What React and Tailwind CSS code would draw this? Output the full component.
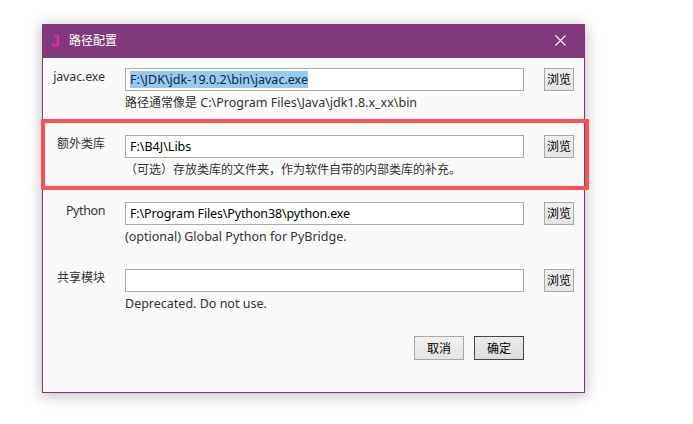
const FONT = "font-['Noto_Sans','Noto_Sans_CJK_SC',sans-serif]";

function BrowseButton() {
  return (
    <button className="ml-5 flex h-[23px] w-[30px] shrink-0 items-center justify-center whitespace-nowrap border border-[#a8a8a8] bg-gradient-to-b from-[#f0f0f0] to-[#e4e4e4] pt-px text-[12px] leading-none text-black">
      浏览
    </button>
  );
}

function Row({ label, labelClass, value, valueClass = '', hint }) {
  return (
    <div className="flex h-[67px] items-start">
      <div className={`mr-5 w-[62px] text-right leading-[18px] whitespace-nowrap ${labelClass}`}>{label}</div>
      <div className="w-[399px]">
        <div className="flex h-[23px] items-center border border-[#ababab] bg-white pl-1 text-[12.5px] text-black">
          <span className={`h-[17px] whitespace-pre leading-[17px] ${valueClass}`}>{value}</span>
        </div>
        <div className="mt-[3px] whitespace-pre text-[12.5px] leading-[18px]">{hint}</div>
      </div>
      <BrowseButton />
    </div>
  );
}

export default function App() {
  return (
    <div className={`relative h-[424px] w-[693px] overflow-hidden bg-white text-[#333333] ${FONT}`}>
      <div className="ml-[42px] mt-6 flex h-[369px] w-[543px] flex-col border border-[#82397b] bg-[#fafafa] shadow-[0_2px_14px_1px_rgba(0,0,0,0.25)]">
        <div className="flex h-[33px] items-center bg-[#82397b] pb-[2px] text-white">
          <span className="ml-2 w-[10px] pt-[2px] font-['Liberation_Sans',sans-serif] text-[16px] font-bold leading-none text-[#dc2a98]">J</span>
          <span className="ml-2 text-[12px] leading-[18px]">路径配置</span>
          <svg className="ml-auto mr-[18px] size-[11px]" viewBox="0 0 11 11" stroke="#fff" strokeWidth="1.1">
            <path d="M.5.5 10.5 10.5M10.5.5.5 10.5" />
          </svg>
        </div>
        <div className="pt-[10px]">
          <Row
            label="javac.exe"
            labelClass="text-[12.5px] tracking-[-0.15px]"
            value="F:\JDK\jdk-19.0.2\bin\javac.exe"
            valueClass="bg-[#99c9ef] text-[#0b2a47] tracking-[0.02px]"
            hint={<><span className="text-[12px]">路径通常像是</span>{' C:\\Program Files\\Java\\jdk1.8.x_xx\\bin'}</>}
          />
          <Row
            label="额外类库"
            labelClass="text-[12px]"
            value="F:\B4J\Libs"
            hint={<span className="text-[12px]">（可选）存放类库的文件夹，作为软件自带的内部类库的补充。</span>}
          />
          <Row
            label="Python"
            labelClass="text-[12.5px] tracking-[-0.4px]"
            value="F:\Program Files\Python38\python.exe"
            valueClass="tracking-[-0.14px]"
            hint="(optional) Global Python for PyBridge."
          />
          <Row label="共享模块" labelClass="text-[12px]" value="" hint="Deprecated. Do not use." />
        </div>
        <div className="ml-[371px] flex gap-[10px] text-[12px] leading-[18px] text-black">
          <button className="h-6 w-[50px] border border-[#a8a8a8] bg-gradient-to-b from-[#f0f0f0] to-[#e4e4e4] pt-[2px]">取消</button>
          <button className="h-6 w-[50px] border border-[#454545] bg-gradient-to-b from-[#ebebeb] to-[#dcdcdc] pt-[2px]">确定</button>
        </div>
      </div>
      <div className="absolute left-[41px] top-[119px] h-[71px] w-[548px] rounded-[1px] border-4 border-[#fc5252]" />
    </div>
  );
}
